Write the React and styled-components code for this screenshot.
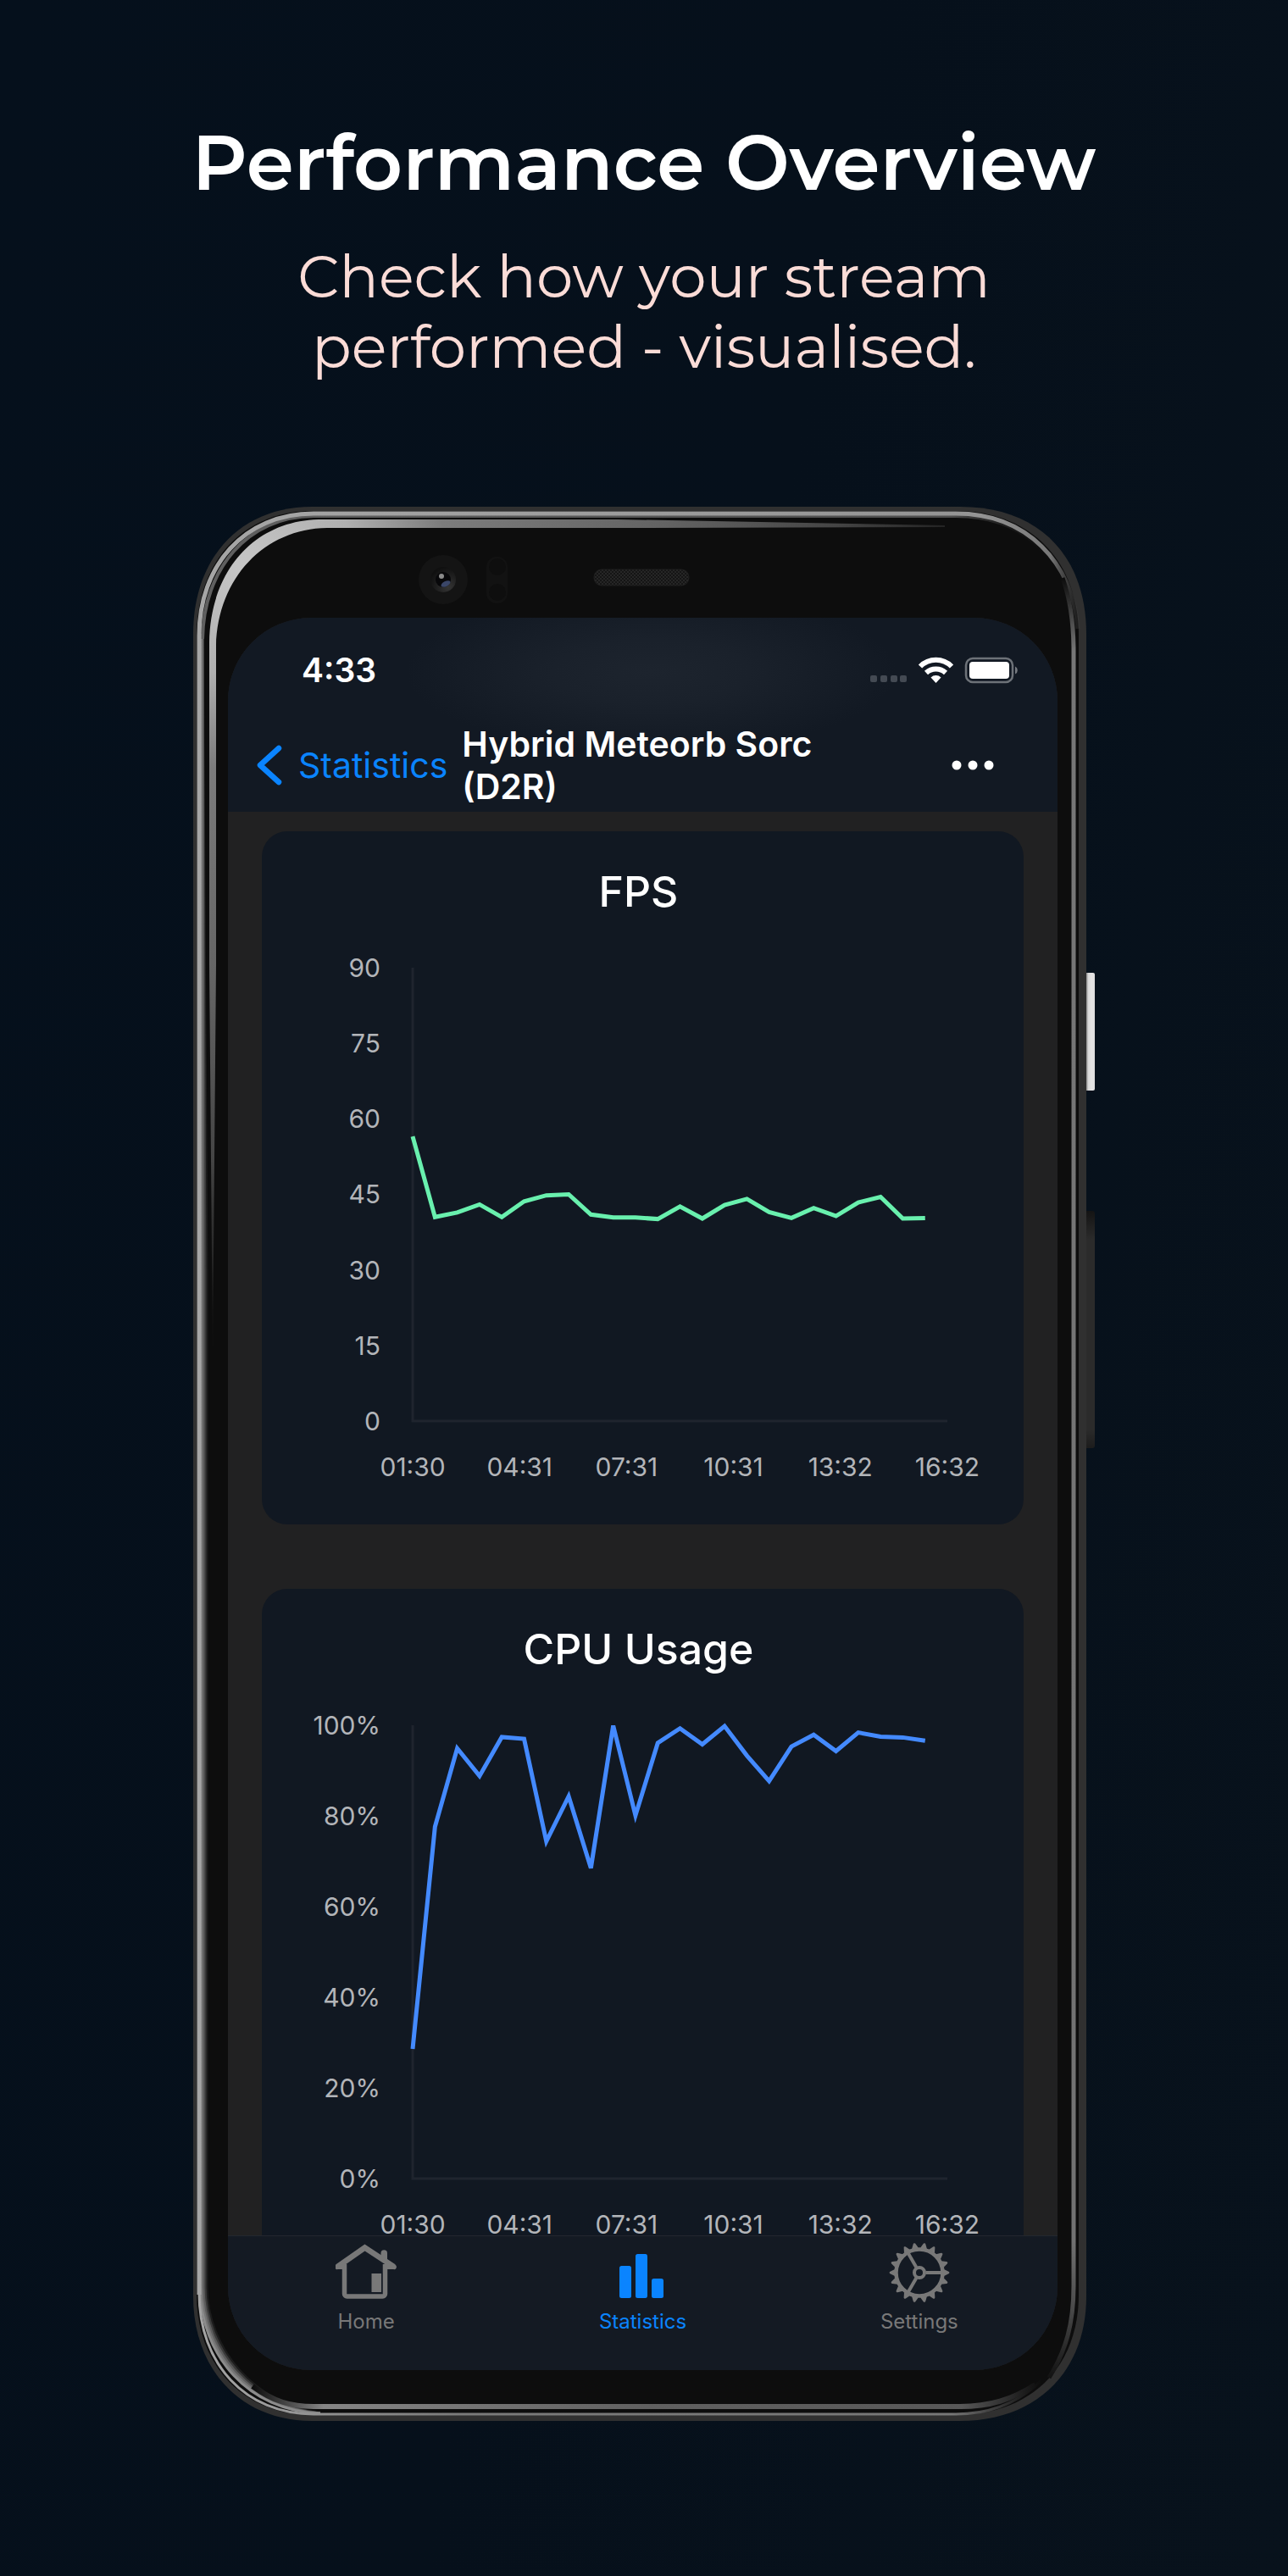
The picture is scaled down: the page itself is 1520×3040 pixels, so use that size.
import React from "react";
import styled, { createGlobalStyle } from "styled-components";

const GlobalStyle = createGlobalStyle`
  *, *::before, *::after { box-sizing: border-box; }
  html { background: #06101b; }
  body {
    margin: 0;
    color: #fff;
    font-family: Inter, "Liberation Sans", sans-serif;
  }
  h1, h2, p, ul, ol { margin: 0; padding: 0; }
  ul, ol { list-style: none; }
`;

const Poster = styled.main`
  min-height: 100vh;
  display: flex;
  flex-direction: column;
  align-items: center;
  padding: 136px 24px 40px;
  background: linear-gradient(100deg, #05101c 0%, #06101b 50%, #08121c 100%);
`;

const Headline = styled.h1`
  font-family: Montserrat, Inter, sans-serif;
  font-size: 90px;
  line-height: 112px;
  font-weight: 600;
  text-align: center;
`;

const Tagline = styled.p`
  max-width: 900px;
  margin-top: 37px;
  font-family: Montserrat, Inter, sans-serif;
  font-size: 69px;
  line-height: 83px;
  font-weight: 400;
  text-align: center;
  color: #fbdcd7;
`;

/* Phone */

const PhoneRow = styled.div`
  display: flex;
  width: 100%;
  max-width: 1064px;
  margin-top: 147px;
`;

const Phone = styled.div`
  position: relative;
  flex: 1;
  min-width: 0;
  padding: 131px 34px 60px 41px;
`;

const Chassis = styled.svg`
  position: absolute;
  inset: 0;
  width: 100%;
  height: 100%;
`;

const SideKeys = styled.div`
  width: 10px;
  padding-top: 550px;
  display: flex;
  flex-direction: column;
  gap: 142px;
`;

const PowerKey = styled.div`
  height: 139px;
  border-radius: 0 2px 2px 0;
  background: linear-gradient(90deg, #8d8d8d, #d8d8d8 25%, #e6e5e5 60%, #e0dfdf);
`;

const VolumeKey = styled.div`
  height: 280px;
  border-radius: 0 3px 3px 0;
  background: linear-gradient(#141414, #2b2b2b 12%, #2b2b2b 92%, #1c1c1c);
`;

const Screen = styled.div`
  position: relative;
  display: flex;
  flex-direction: column;
  aspect-ratio: 979 / 2068;
  overflow: hidden;
  border-radius: 98px;
  background: #212122;
`;

const TopBar = styled.header`
  background:
    radial-gradient(ellipse 290px 95px at 51% 64px, #1d242e 0%, #1a212b 40%, rgba(18, 25, 35, 0) 100%),
    #121923;
`;

const StatusBar = styled.div`
  display: flex;
  align-items: center;
  justify-content: space-between;
  height: 124px;
  padding: 0 45px 0 87px;
`;

const Clock = styled.time`
  font-size: 39px;
  line-height: 48px;
  font-weight: 600;
`;

const NavBar = styled.div`
  display: flex;
  align-items: center;
  height: 105px;
  padding: 0 75px 5px 32px;
`;

const BackLink = styled.a`
  display: flex;
  align-items: center;
  gap: 17px;
  color: #0a84ff;
  font-size: 41px;
  line-height: 50px;
  text-decoration: none;
`;

const ScreenTitle = styled.h2`
  flex: 1;
  min-width: 0;
  padding: 0 100px 0 17px;
  font-size: 41px;
  line-height: 50px;
  font-weight: 600;
`;

const MoreButton = styled.button`
  display: flex;
  padding: 0;
  border: 0;
  background: none;
  color: #fff;
`;

const Feed = styled.div`
  flex: 1;
  min-height: 0;
  overflow: hidden;
  display: flex;
  flex-direction: column;
  gap: 76px;
  padding: 23px 40px 0;
`;

const Card = styled.section`
  flex: none;
  padding: 41px 0 50px;
  border-radius: 30px;
  background: #111822;
`;

const CardTitle = styled.h2`
  padding-right: 10px;
  font-size: 50px;
  line-height: 60px;
  font-weight: 500;
  text-align: center;
`;

const PlotRow = styled.div`
  display: grid;
  grid-template-columns: 140px 1fr;
  column-gap: 38px;
  margin-top: 42px;
  padding-right: 90px;
`;

const YLabels = styled.ol`
  display: flex;
  flex-direction: column;
  justify-content: space-between;
  text-align: right;
`;

const XLabels = styled.ol`
  display: grid;
  grid-template-columns: repeat(6, 1fr);
  margin-top: 18px;
  padding: 0 27px 0 115px;
  text-align: center;
`;

const Tick = styled.li`
  font-size: 30px;
  line-height: 36px;
  color: #b3b5b9;
`;

const Plot = styled.svg`
  display: block;
  width: 100%;
  height: 535px;
  margin: 18px 0;
  overflow: visible;
`;

const TabBar = styled.nav`
  flex: none;
  display: grid;
  grid-template-columns: repeat(3, 1fr);
  height: 159px;
  border-top: 1px solid #23272f;
  background: #141a23;
`;

const Tab = styled.a`
  display: flex;
  flex-direction: column;
  align-items: center;
  gap: 7px;
  padding-top: 7px;
  font-size: 24px;
  line-height: 30px;
  text-decoration: none;
  color: ${(p) => (p.$active ? "#0a84ff" : "#787878")};
`;

/* Rim reflection along the left edge, brightest on the outside */
const RIM_LAYERS = [
  { x: 16, color: "#1c1c1c" },
  { x: 14, color: "#3a3a3a" },
  { x: 12, color: "#5c5c5c" },
  { x: 10, color: "#767676" },
  { x: 8, color: "#8c8c8c" },
];

function PhoneArt() {
  return (
    <Chassis viewBox="0 0 1054 2259" preserveAspectRatio="none" aria-hidden="true">
      <defs>
        <linearGradient id="rimTop" gradientUnits="userSpaceOnUse" x1="0" y1="0" x2="1054" y2="0">
          <stop offset="0" stopColor="#a6a6a6" />
          <stop offset="0.88" stopColor="#949494" />
          <stop offset="0.96" stopColor="#777" />
          <stop offset="1" stopColor="#444" stopOpacity="0" />
        </linearGradient>
        <linearGradient id="rimTopInner" gradientUnits="userSpaceOnUse" x1="0" y1="0" x2="1054" y2="0">
          <stop offset="0" stopColor="#606060" />
          <stop offset="0.85" stopColor="#4d4d4d" />
          <stop offset="0.97" stopColor="#0d0d0d" stopOpacity="0" />
        </linearGradient>
        <linearGradient id="rimBottom" gradientUnits="userSpaceOnUse" x1="0" y1="0" x2="1054" y2="0">
          <stop offset="0" stopColor="#a6a6a6" />
          <stop offset="0.3" stopColor="#7a7a7a" />
          <stop offset="0.85" stopColor="#777" />
          <stop offset="0.95" stopColor="#555" stopOpacity="0" />
        </linearGradient>
        <radialGradient id="innerShine" gradientUnits="userSpaceOnUse" cx="60" cy="70" r="1000">
          <stop offset="0" stopColor="#c6c6c6" />
          <stop offset="0.13" stopColor="#b0b0b0" />
          <stop offset="0.24" stopColor="#7c7c7c" />
          <stop offset="0.5" stopColor="#636363" />
          <stop offset="0.7" stopColor="#454545" />
          <stop offset="0.88" stopColor="#161616" />
          <stop offset="1" stopColor="#0d0d0d" />
        </radialGradient>
        <linearGradient id="rightShine" gradientUnits="userSpaceOnUse" x1="0" y1="85" x2="0" y2="2215">
          <stop offset="0" stopColor="#0d0d0d" />
          <stop offset="0.04" stopColor="#777" />
          <stop offset="0.92" stopColor="#727272" />
          <stop offset="0.96" stopColor="#484848" />
          <stop offset="1" stopColor="#0d0d0d" />
        </linearGradient>
        <linearGradient id="bottomShine" gradientUnits="userSpaceOnUse" x1="70" y1="0" x2="1000" y2="0">
          <stop offset="0" stopColor="#0d0d0d" />
          <stop offset="0.09" stopColor="#858585" />
          <stop offset="0.5" stopColor="#606060" />
          <stop offset="0.9" stopColor="#585858" />
          <stop offset="1" stopColor="#0d0d0d" />
        </linearGradient>
        <pattern id="mesh" width="4" height="4" patternUnits="userSpaceOnUse">
          <rect width="4" height="4" fill="#151515" />
          <rect width="2" height="2" fill="#262626" />
          <rect x="2" y="2" width="2" height="2" fill="#262626" />
        </pattern>
        <radialGradient id="lens" cx="0.7" cy="0.8" r="0.8">
          <stop offset="0" stopColor="#343434" />
          <stop offset="1" stopColor="#101010" />
        </radialGradient>
      </defs>
      <path d="M140 0H905C1000 0 1054 60 1054 150V2112C1054 2200 996 2259 905 2259H140C56 2259 0 2198 0 2112V150C0 62 54 0 140 0Z" fill="#303030" />
      <path d="M140 5H900C990 5 1045 66 1045 152V2110C1045 2194 990 2252 900 2252H140C60 2252 4 2194 4 2110V152C4 66 58 5 140 5Z" fill="#0d0d0d" />
      <g fill="none">
        {RIM_LAYERS.map(({ x, color }) => (
          <path
            key={x}
            d={`M${Math.min(x, 11)} 150L${x} 900V2100C${x} ${2190 - x} ${58 + x} ${2256 - x} 150 2250`}
            stroke={color}
            strokeWidth="3"
          />
        ))}
        <path d="M11 156C12 74 64 11 142 11H900C976 11 1026 56 1038 130" stroke="url(#rimTopInner)" strokeWidth="4" />
        <path d="M7 2110V152C7 70 60 8 142 8H900C984 8 1038 66 1044 144" stroke="url(#rimTop)" strokeWidth="5" />
        <path d="M7 2108C7 2192 62 2251 142 2251H900C976 2251 1030 2200 1042 2130" stroke="url(#rimBottom)" strokeWidth="3" />
        <path d="M1026 84C1036 112 1039 140 1039 170V2100C1039 2144 1030 2176 1010 2208" stroke="url(#rightShine)" strokeWidth="5" />
        <path d="M70 2218C94 2236 116 2242 142 2242H905C940 2242 966 2234 994 2216" stroke="url(#bottomShine)" strokeWidth="6" />
      </g>
      <path d="M23 1000L19 540V160C20 78 70 17 148 15H500L887 22V24L500 25H158C84 26 29 84 27 164V540Z" fill="url(#innerShine)" />
      <circle cx="295" cy="86" r="29" fill="#141414" />
      <circle cx="295" cy="86" r="15" fill="url(#lens)" />
      <circle cx="295" cy="86" r="9" fill="#08080a" />
      <ellipse cx="298" cy="91" rx="6" ry="3" fill="#3a4668" transform="rotate(-28 298 91)" />
      <circle cx="293" cy="82" r="3" fill="#8b8b8b" />
      <rect x="346" y="59" width="25" height="55" rx="12" fill="#121212" />
      <circle cx="359" cy="71" r="10" fill="#0e0e0e" />
      <circle cx="359" cy="101" r="10" fill="#0e0e0e" />
      <rect x="473" y="74" width="112" height="19" rx="9" fill="url(#mesh)" stroke="#1f1f1f" />
    </Chassis>
  );
}

function StatusIcons() {
  return (
    <svg width="176" height="32" viewBox="0 0 176 32" role="img" aria-label="No signal, Wi-Fi, battery full">
      <g fill="#444a53">
        <rect x="0" y="22" width="8" height="8" rx="2" />
        <rect x="12" y="22" width="8" height="8" rx="2" />
        <rect x="24" y="22" width="8" height="8" rx="2" />
        <rect x="35" y="22" width="8" height="8" rx="2" />
      </g>
      <g fill="none" stroke="#fff" strokeWidth="6">
        <path d="M59 11.500a26 26 0 0 1 37 0" />
        <path d="M66 19a17 17 0 0 1 23 0" />
      </g>
      <path d="M77.500 31L71.500 24.500a8.500 8.500 0 0 1 12 0Z" fill="#fff" />
      <rect x="113" y="2" width="55" height="28" rx="8" fill="none" stroke="#6d7278" strokeWidth="2.500" />
      <rect x="117" y="6" width="47" height="20" rx="4" fill="#fff" />
      <path d="M171 11.500a5 5 0 0 1 0 9Z" fill="#777b81" />
    </svg>
  );
}

function HomeIcon() {
  return (
    <svg width="72" height="72" viewBox="0 0 72 72" aria-hidden="true">
      <g fill="none" stroke="currentColor">
        <path d="M10.500 26V61a3 3 0 0 0 3 3H55.500a3 3 0 0 0 3-3V26" strokeWidth="5.500" />
        <path d="M3 28.500L34.500 6.500L68 28.500" strokeWidth="6.500" strokeLinecap="round" />
      </g>
      <path d="M1 27L10 22V32H2.500A2.500 2.500 0 0 1 1 27ZM70 27L58 20V32H68.500A2.500 2.500 0 0 0 70 27Z" fill="currentColor" />
      <path d="M53.500 20V13a3.700 3.700 0 0 1 7.500 0V26Z" fill="currentColor" />
      <rect x="42.500" y="37" width="11.500" height="22" fill="currentColor" />
    </svg>
  );
}

function BarsIcon() {
  return (
    <svg width="72" height="72" viewBox="0 0 72 72" fill="currentColor" aria-hidden="true">
      <rect x="9" y="28" width="14" height="38" rx="2.500" />
      <rect x="28" y="14" width="14" height="52" rx="2.500" />
      <rect x="47" y="43" width="14" height="23" rx="2.500" />
    </svg>
  );
}

function GearIcon() {
  const teeth = Array.from({ length: 18 }, (_, i) => i * 20);
  return (
    <svg width="72" height="72" viewBox="0 0 72 72" fill="none" stroke="currentColor" aria-hidden="true">
      <circle cx="36" cy="36" r="27.500" strokeWidth="4.500" />
      <circle cx="36" cy="36" r="6" strokeWidth="4" />
      {[0, 120, 240].map((a) => (
        <path key={a} d="M43.500 36H62" strokeWidth="4" transform={`rotate(${a} 36 36)`} />
      ))}
      {teeth.map((a) => (
        <path
          key={a}
          d="M65 32L70.500 34.700a1.400 1.400 0 0 1 0 2.600L65 40Z"
          fill="currentColor"
          stroke="none"
          transform={`rotate(${a} 36 36)`}
        />
      ))}
    </svg>
  );
}

const PLOT_W = 630;
const PLOT_H = 535;
const TIMES = ["01:30", "04:31", "07:31", "10:31", "13:32", "16:32"];

const CHARTS = [
  {
    title: "FPS",
    color: "#69f0ae",
    max: 90,
    ticks: ["90", "75", "60", "45", "30", "15", "0"],
    values: [
      56.5, 40.5, 41.4, 43, 40.5, 43.6, 44.8, 45, 41, 40.4, 40.4, 40.1, 42.6, 40.2,
      42.9, 44.1, 41.5, 40.3, 42.3, 40.7, 43.4, 44.5, 40.2, 40.3,
    ],
  },
  {
    title: "CPU Usage",
    color: "#448aff",
    max: 100,
    ticks: ["100%", "80%", "60%", "40%", "20%", "0%"],
    values: [
      28.6, 77.6, 94.9, 88.8, 97.4, 97, 74.4, 84.3, 68.5, 99.9, 80.1, 96.1, 99.3,
      95.8, 99.8, 93.3, 87.7, 95.3, 97.9, 94.3, 98.4, 97.5, 97.3, 96.6,
    ],
  },
];

function Chart({ title, color, max, ticks, values }) {
  const points = values
    .map((v, i) => `${((i * PLOT_W) / 24).toFixed(1)},${(PLOT_H * (1 - v / max)).toFixed(1)}`)
    .join(" ");
  return (
    <Card>
      <CardTitle>{title}</CardTitle>
      <PlotRow>
        <YLabels>
          {ticks.map((t) => (
            <Tick key={t}>{t}</Tick>
          ))}
        </YLabels>
        <Plot viewBox={`0 0 ${PLOT_W} ${PLOT_H}`} preserveAspectRatio="none" role="img" aria-label={`${title} over time`}>
          <path d={`M0 0V${PLOT_H}H${PLOT_W}`} fill="none" stroke="#1f242e" strokeWidth="3" />
          <polyline points={points} fill="none" stroke={color} strokeWidth="5" />
        </Plot>
      </PlotRow>
      <XLabels>
        {TIMES.map((t) => (
          <Tick key={t}>{t}</Tick>
        ))}
      </XLabels>
    </Card>
  );
}

export default function App() {
  return (
    <Poster>
      <GlobalStyle />
      <Headline>Performance Overview</Headline>
      <Tagline>
        Check how your stream
        <br />
        performed - visualised.
      </Tagline>
      <PhoneRow>
        <Phone>
          <PhoneArt />
          <Screen>
            <TopBar>
              <StatusBar>
                <Clock>4:33</Clock>
                <StatusIcons />
              </StatusBar>
              <NavBar>
                <BackLink href="#statistics">
                  <svg width="34" height="50" viewBox="0 0 34 50" fill="none" stroke="currentColor" strokeWidth="6.500" strokeLinecap="round" strokeLinejoin="round" aria-hidden="true">
                    <path d="M28 5L6 25L28 45" />
                  </svg>
                  Statistics
                </BackLink>
                <ScreenTitle>Hybrid Meteorb Sorc (D2R)</ScreenTitle>
                <MoreButton type="button" aria-label="More options">
                  <svg width="50" height="12" viewBox="0 0 50 12" fill="currentColor" aria-hidden="true">
                    <circle cx="6" cy="6" r="5.500" />
                    <circle cx="25" cy="6" r="5.500" />
                    <circle cx="44" cy="6" r="5.500" />
                  </svg>
                </MoreButton>
              </NavBar>
            </TopBar>
            <Feed>
              {CHARTS.map((c) => (
                <Chart key={c.title} {...c} />
              ))}
            </Feed>
            <TabBar>
              <Tab href="#home">
                <HomeIcon />
                Home
              </Tab>
              <Tab href="#statistics" $active aria-current="page">
                <BarsIcon />
                Statistics
              </Tab>
              <Tab href="#settings">
                <GearIcon />
                Settings
              </Tab>
            </TabBar>
          </Screen>
        </Phone>
        <SideKeys>
          <PowerKey />
          <VolumeKey />
        </SideKeys>
      </PhoneRow>
    </Poster>
  );
}
